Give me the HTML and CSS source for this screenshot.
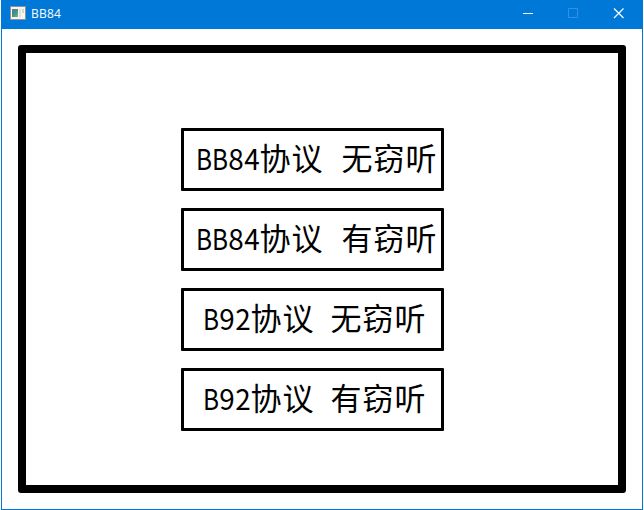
FILE: index.html
```
<!DOCTYPE html>
<html lang="zh-CN">
<head>
<meta charset="utf-8">
<title>BB84</title>
<link rel="stylesheet" href="styles.css">
</head>
<body>
<div class="window">
  <header class="titlebar">
    <svg class="app-icon" width="16" height="14" viewBox="0 0 16 14">
      <defs><linearGradient id="pane" x2="1" y2="1"><stop offset="0" stop-color="#507caa"/><stop offset=".5" stop-color="#45927d"/><stop offset="1" stop-color="#75b589"/></linearGradient></defs>
      <path fill="#8d9298" d="M0 0h16v14H0z"/>
      <path fill="#f5f5f3" d="M1 1h14v12H1z"/>
      <path fill="url(#pane)" d="M2 3h6v8H2z"/>
      <path fill="#dce2df" d="M9 3h2v8H9z"/>
      <path fill="#cbd7cf" d="M12 3h2v4h-2z"/>
    </svg>
    <span class="title">BB84</span>
    <svg class="controls" width="137" height="28" viewBox="0 0 137 28" fill="none">
      <path stroke="#fff" d="M18 13.500h10"/>
      <path stroke="#3391e1" d="M63.500 8.500h9v9h-9z"/>
      <path stroke="#fff" stroke-width="1.200" d="M109 8.500l9.500 9.500M118.500 8.500L109 18"/>
    </svg>
  </header>
  <main class="frame">
    <div class="choice long"><span class="latin"><b>B</b><b>B</b><i>8</i><i>4</i></span><span class="cjk">协议</span><span class="gap"></span><span class="cjk">无窃听</span></div>
    <div class="choice long"><span class="latin"><b>B</b><b>B</b><i>8</i><i>4</i></span><span class="cjk">协议</span><span class="gap"></span><span class="cjk">有窃听</span></div>
    <div class="choice"><span class="latin"><b>B</b><i>9</i><i>2</i></span><span class="cjk">协议</span><span class="gap"></span><span class="cjk">无窃听</span></div>
    <div class="choice"><span class="latin"><b>B</b><i>9</i><i>2</i></span><span class="cjk">协议</span><span class="gap"></span><span class="cjk">有窃听</span></div>
  </main>
</div>
</body>
</html>
```
FILE: styles.css
```
* { box-sizing: border-box; }
body { margin: 0; background: #fff; overflow: hidden; }
.window {
  width: 642px;
  height: 510px;
  margin-left: 1px;
  border: 1px solid #0078d7;
  border-top: 0;
}
.titlebar {
  display: flex;
  align-items: center;
  height: 29px;
  padding: 0 0 2px 8px;
  background: #0078d7;
}
.app-icon { margin-top: -1px; }
.title {
  margin-left: 5px;
  color: #fff;
  font: 12px/18px "Open Sans", "Noto Sans", sans-serif;
  letter-spacing: 0.2px;
}
.controls { margin-left: auto; }
.frame {
  display: flex;
  flex-direction: column;
  align-items: center;
  gap: 17px;
  width: 608px;
  height: 448px;
  margin: 16px 0 0 16px;
  padding: 75px 19px 0 0;
  border: 8px solid #000;
  border-radius: 3px;
}
.choice {
  display: flex;
  align-items: center;
  justify-content: center;
  width: 263px;
  height: 63px;
  padding: 0 0 6px 4px;
  border: 3px solid #000;
  border-radius: 1px;
  color: #000;
  font: 31px/44px "Noto Sans CJK SC", sans-serif;
  white-space: nowrap;
}
.latin {
  display: flex;
  font-size: 29px;
}
/* Half-width cells: each character is condensed to fit 16px. */
.latin b,
.latin i {
  display: flex;
  justify-content: center;
  width: 16px;
  font-weight: 400;
  font-style: normal;
}
.latin b { transform: scaleX(0.84); }
.latin i { transform: scaleX(0.96); }
.cjk { letter-spacing: 1px; }
.gap { width: 16px; }
.long { padding-left: 8px; }
.long .gap { width: 18px; }
```
